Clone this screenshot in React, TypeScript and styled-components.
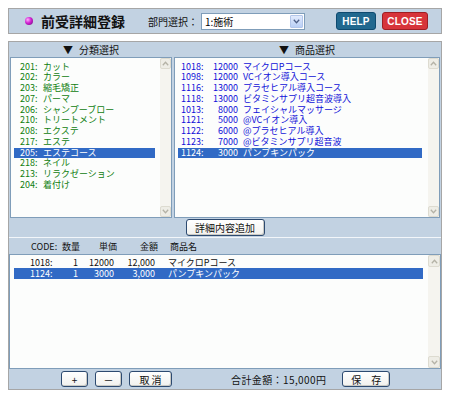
import React from "react";
import styled, { createGlobalStyle } from "styled-components";

const GlobalStyle = createGlobalStyle`
  body {
    margin: 8px;
    background: #ffffff;
    font-family: "Noto Sans CJK JP", sans-serif;
  }
`;

const PANEL_BG = "#c2d2e2";
const LIST_BORDER = "#7f9db9";
const SELECTED = "#316ac5";

const Page = styled.div`
  width: 434px;
  display: flex;
  flex-direction: column;
  gap: 7px;
`;

const TitleBar = styled.div`
  height: 24px;
  display: flex;
  align-items: center;
  padding: 0 13px 0 16px;
  background: ${PANEL_BG};
  border: 1px solid #a6a6a6;
`;

const Ball = styled.span`
  width: 8px;
  height: 8px;
  border-radius: 50%;
  background: radial-gradient(circle at 35% 35%, #ffb0ff 0, #d020d0 45%, #6a0a7a 100%);
  margin-right: 8px;
`;

const Title = styled.h1`
  margin: 0;
  font-size: 14px;
  font-weight: bold;
  line-height: 16px;
  color: #111;
`;

const Label = styled.span`
  margin-left: 23px;
  font-size: 10px;
  color: #111;
  white-space: nowrap;
`;

const SelectBox = styled.div`
  margin-left: 3px;
  width: 102px;
  height: 15px;
  display: flex;
  align-items: center;
  justify-content: space-between;
  background: #fff;
  border: 1px solid ${LIST_BORDER};
`;

const SelectValue = styled.span`
  padding-left: 3px;
  font-size: 10px;
  color: #000;
`;

const SelectArrow = styled.span`
  width: 13px;
  height: 13px;
  margin-right: 1px;
  display: flex;
  align-items: center;
  justify-content: center;
  background: linear-gradient(#e2ebfd, #b9cff6);
  border: 1px solid #b3c6ea;
  box-sizing: border-box;
  border-radius: 1px;
`;

const HeadButtons = styled.div`
  margin-left: auto;
  display: flex;
  gap: 6px;
`;

const HeadButton = styled.button<{ $tone: "help" | "close" }>`
  height: 18px;
  padding: 0;
  width: ${(p) => (p.$tone === "help" ? "40px" : "46px")};
  border-radius: 3px;
  border: 1px solid ${(p) => (p.$tone === "help" ? "#0e4a70" : "#9e1e24")};
  background: ${(p) => (p.$tone === "help" ? "#21688f" : "#d7343a")};
  color: #fff;
  font-family: "Liberation Sans", Arial, sans-serif;
  font-weight: bold;
  font-size: 10px;
  letter-spacing: 0.2px;
`;

const Panel = styled.div`
  display: flex;
  flex-direction: column;
  background: ${PANEL_BG};
  border: 1px solid #a6a6a6;
`;

const Columns = styled.div`
  display: grid;
  grid-template-columns: 162px 266px;
  column-gap: 2px;
  padding: 0 1px;
`;

const ColumnHead = styled.div`
  height: 15px;
  display: flex;
  align-items: center;
  justify-content: center;
  gap: 6px;
  font-size: 10px;
  color: #111;
`;

const ListBox = styled.div<{ $height: number }>`
  height: ${(p) => p.$height}px;
  box-sizing: border-box;
  display: flex;
  background: #fcfdfc;
  border: 1px solid ${LIST_BORDER};
`;

const Items = styled.div<{ $top: number }>`
  flex: 1;
  padding-top: ${(p) => p.$top}px;
`;

const Row = styled.div<{ $selected?: boolean; $color: string; $cols: string; $h: number; $left: number; $right: number; $pad: number }>`
  display: grid;
  grid-template-columns: ${(p) => p.$cols};
  height: ${(p) => p.$h}px;
  line-height: ${(p) => p.$h}px;
  margin: 0 ${(p) => p.$right}px 0 ${(p) => p.$left}px;
  padding-left: ${(p) => p.$pad}px;
  font-size: 9px;
  white-space: nowrap;
  color: ${(p) => (p.$selected ? "#fff" : p.$color)};
  background: ${(p) => (p.$selected ? SELECTED : "transparent")};
`;

const Num = styled.span`
  text-align: right;
`;

const ScrollBar = styled.div<{ $w: number }>`
  width: ${(p) => p.$w}px;
  display: flex;
  flex-direction: column;
  justify-content: space-between;
  background: #f5f4ef;
`;

const ScrollArrow = styled.span<{ $w: number }>`
  width: ${(p) => p.$w}px;
  height: ${(p) => p.$w}px;
  box-sizing: border-box;
  display: flex;
  align-items: center;
  justify-content: center;
  background: #eeede6;
  border: 1px solid #dddbd0;
  border-radius: 2px;
`;

const MiddleBar = styled.div`
  height: 20px;
  display: flex;
  justify-content: center;
  align-items: flex-start;
  padding-top: 1px;
  box-sizing: border-box;
  border-bottom: 1px solid #f2f6fa;
`;

const Button = styled.button<{ $w: number; $h: number }>`
  width: ${(p) => p.$w}px;
  height: ${(p) => p.$h}px;
  padding: 0;
  display: flex;
  align-items: center;
  justify-content: center;
  background: linear-gradient(#ffffff, #f1f1ee);
  border: 1px solid #2d4a70;
  border-radius: 3px;
  box-shadow: inset -1px -1px 0 #c9c9c4;
  font-family: "Noto Sans CJK JP", sans-serif;
  font-size: 10px;
  color: #111;
  white-space: pre;
`;

const DetailHead = styled.div`
  height: 16px;
  display: grid;
  grid-template-columns: 26px 23px 37px 41px 12px auto;
  align-items: center;
  padding-left: 22px;
  font-size: 9px;
  color: #111;
`;

const BottomBar = styled.div`
  height: 20px;
  display: flex;
  align-items: center;
  gap: 7px;
  padding-left: 52px;
`;

const Total = styled.span`
  margin: 0 9px 0 52px;
  font-size: 10px;
  color: #111;
  letter-spacing: 0.4px;
`;

const Chevron = ({ up, color, size = 7 }: { up?: boolean; color: string; size?: number }) => (
  <svg width={size} height={size - 2} viewBox="0 0 7 5">
    <path d={up ? "M0.8 4.2 L3.5 1.3 L6.2 4.2" : "M0.8 0.8 L3.5 3.7 L6.2 0.8"} fill="none" stroke={color} strokeWidth="1.3" />
  </svg>
);

const Scroll = ({ w }: { w: number }) => (
  <ScrollBar $w={w}>
    <ScrollArrow $w={w}>
      <Chevron up color="#b4b2a6" />
    </ScrollArrow>
    <ScrollArrow $w={w}>
      <Chevron color="#b4b2a6" />
    </ScrollArrow>
  </ScrollBar>
);

const categories = [
  ["201:", "カット"],
  ["202:", "カラー"],
  ["203:", "縮毛矯正"],
  ["207:", "パーマ"],
  ["206:", "シャンプーブロー"],
  ["210:", "トリートメント"],
  ["208:", "エクステ"],
  ["217:", "エステ"],
  ["205:", "エステコース"],
  ["218:", "ネイル"],
  ["213:", "リラクゼーション"],
  ["204:", "着付け"],
];

const products = [
  ["1018:", "12000", "マイクロPコース"],
  ["1098:", "12000", "VCイオン導入コース"],
  ["1116:", "13000", "プラセヒアル導入コース"],
  ["1118:", "13000", "ビタミンサプリ超音波導入"],
  ["1013:", "8000", "フェイシャルマッサージ"],
  ["1121:", "5000", "@VCイオン導入"],
  ["1122:", "6000", "@プラセヒアル導入"],
  ["1123:", "7000", "@ビタミンサプリ超音波"],
  ["1124:", "3000", "パンプキンパック"],
];

const details = [
  ["1018:", "1", "12000", "12,000", "マイクロPコース"],
  ["1124:", "1", "3000", "3,000", "パンプキンパック"],
];

export default function App() {
  return (
    <>
      <GlobalStyle />
      <Page>
        <TitleBar>
          <Ball />
          <Title>前受詳細登録</Title>
          <Label>部門選択：</Label>
          <SelectBox>
            <SelectValue>1:施術</SelectValue>
            <SelectArrow>
              <Chevron color="#4d5f86" />
            </SelectArrow>
          </SelectBox>
          <HeadButtons>
            <HeadButton $tone="help">HELP</HeadButton>
            <HeadButton $tone="close">CLOSE</HeadButton>
          </HeadButtons>
        </TitleBar>

        <Panel>
          <Columns>
            <ColumnHead>
              <span>▼</span>
              <span>分類選択</span>
            </ColumnHead>
            <ColumnHead>
              <span>▼</span>
              <span>商品選択</span>
            </ColumnHead>
          </Columns>
          <Columns>
            <ListBox $height={161}>
              <Items $top={3.6}>
                {categories.map(([code, name]) => (
                  <Row key={code} $selected={code === "205:"} $color="#108010" $cols="23px auto" $h={10.75} $left={3} $right={5} $pad={6}>
                    <span>{code}</span>
                    <span>{name}</span>
                  </Row>
                ))}
              </Items>
              <Scroll w={11} />
            </ListBox>
            <ListBox $height={161}>
              <Items $top={3.6}>
                {products.map(([code, price, name]) => (
                  <Row key={code} $selected={code === "1124:"} $color="#1010d8" $cols="25px 32px 5px auto" $h={10.75} $left={3} $right={6} $pad={3}>
                    <span>{code}</span>
                    <Num>{price}</Num>
                    <span />
                    <span>{name}</span>
                  </Row>
                ))}
              </Items>
              <Scroll w={11} />
            </ListBox>
          </Columns>

          <MiddleBar>
            <Button $w={79} $h={17}>詳細内容追加</Button>
          </MiddleBar>

          <DetailHead>
            <span>CODE:</span>
            <Num>数量</Num>
            <Num>単価</Num>
            <Num>金額</Num>
            <span />
            <span>商品名</span>
          </DetailHead>

          <ListBox $height={115}>
            <Items $top={2}>
              {details.map(([code, qty, price, amount, name]) => (
                <Row key={code} $selected={code === "1124:"} $color="#111" $cols="26px 22px 36px 41px 13px auto" $h={11} $left={4} $right={5} $pad={16}>
                  <span>{code}</span>
                  <Num>{qty}</Num>
                  <Num>{price}</Num>
                  <Num>{amount}</Num>
                  <span />
                  <span>{name}</span>
                </Row>
              ))}
            </Items>
            <Scroll w={12} />
          </ListBox>

          <BottomBar>
            <Button $w={27} $h={16}>+</Button>
            <Button $w={27} $h={16}>－</Button>
            <Button $w={43} $h={16}>取 消</Button>
            <Total>合計金額：15,000円</Total>
            <Button $w={48} $h={16}>保　存</Button>
          </BottomBar>
        </Panel>
      </Page>
    </>
  );
}
